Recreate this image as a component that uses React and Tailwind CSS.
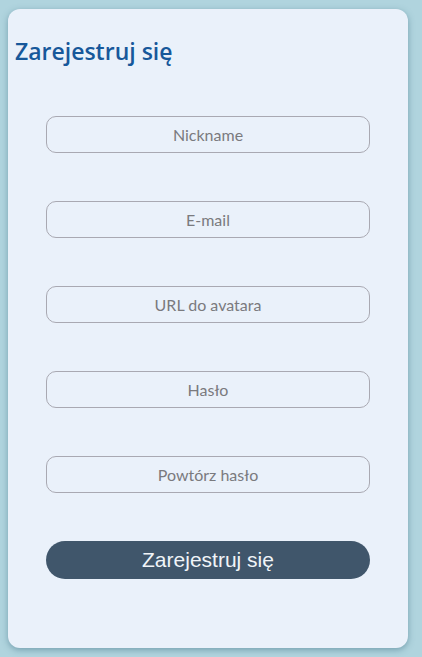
export default function App() {
  const fields = ["Nickname", "E-mail", "URL do avatara", "Hasło", "Powtórz hasło"];
  return (
    <div className="min-h-[657px] w-[422px] bg-[#b0d4de] pt-[9px] pl-[8px] font-['Lato','Noto_Sans',sans-serif]">
      <div className="w-[400px] h-[639px] rounded-[12px] bg-[#eaf1fa] shadow-[0_2px_6px_rgba(60,110,130,0.5)] flex flex-col">
        <h1 className="mt-[27px] ml-[7px] text-[23px] leading-[31px] font-semibold text-[#17589a] font-['Open_Sans',sans-serif]">Zarejestruj się</h1>
        <div className="mt-[49px] px-[38px] flex flex-col gap-[48px]">
          {fields.map((f) => (
            <input
              key={f}
              placeholder={f}
              className="h-[37px] w-full rounded-[10px] border border-[#a9a9b2] bg-transparent text-center text-[16px] text-[#333] placeholder:text-[#7a7a7e] outline-none font-['Lato','Noto_Sans',sans-serif]"
            />
          ))}
          <button className="h-[38px] w-full rounded-full bg-[#40566b] text-[21px] text-[#f0f4f8] font-['Liberation_Sans',Arial,sans-serif]">
            Zarejestruj się
          </button>
        </div>
      </div>
    </div>
  );
}
